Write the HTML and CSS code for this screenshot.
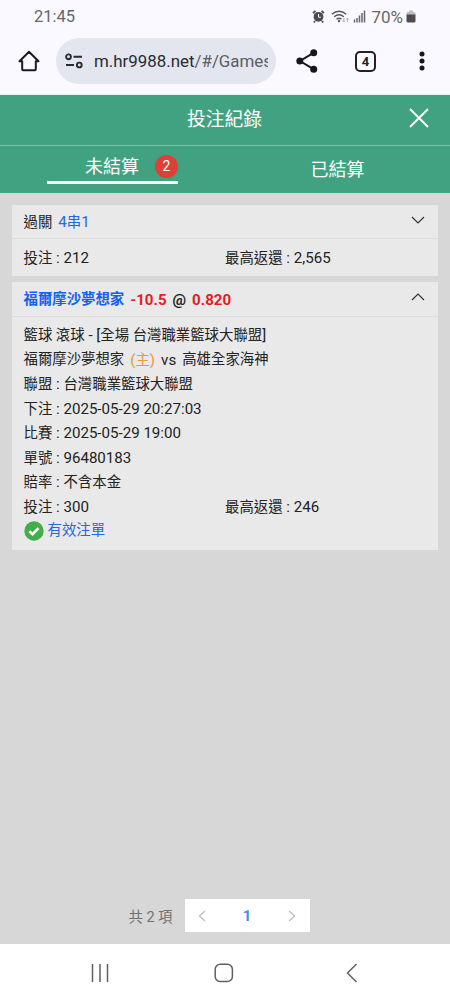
FILE: index.html
```html
<!DOCTYPE html>
<html lang="zh-Hant">
<head>
<meta charset="utf-8">
<title>投注紀錄</title>
<link rel="stylesheet" href="styles.css">
</head>
<body>
<div class="phone">
  <div class="status">
    <span class="time">21:45</span>
    <div class="status-right">
      <svg class="alarm" width="13" height="13" viewBox="0 0 12 13"><circle cx="6" cy="6.8" r="4.900" fill="#4b4b50"/><path d="M.5 3 3 .8M11.500 3 9 .8M2.500 11 1.300 12.500M9.500 11l1.200 1.500" stroke="#4b4b50" stroke-width="1.700"/><path d="M6 4v3.200h2.400" fill="none" stroke="#fff" stroke-width="1"/></svg>
      <svg class="wifi" width="19" height="14" viewBox="0 0 19 14"><g fill="none" stroke="#555559" stroke-width="1.400"><path d="M.8 4.300Q8 -2 15.200 4.300M3.200 6.800Q8 2.800 12.800 6.800M5.500 9.300Q8 7.300 10.500 9.300"/></g><circle cx="8" cy="11" r="1.200" fill="#555559"/><path d="M12.800 8v4m-1.300-1.500 1.300 1.500 1.300-1.500M16.500 12V8m-1.300 1.500L16.500 8l1.300 1.500" fill="none" stroke="#aaa" stroke-width=".9"/></svg>
      <svg class="signal" width="13" height="13" viewBox="0 0 13 13"><path d="M1.500 12.500V9.500M4 12.500V8M6.500 12.500V5.500M9 12.500V3M11.500 12.500V.5" stroke="#66666a" stroke-width="1.500"/></svg>
      <span class="percent">70%</span>
      <svg width="10" height="13" viewBox="0 0 10 13"><path d="M3 .5h4V2h1q1.500 0 1.500 1.500V5h-9V3.500Q.5 2 2 2h1z" fill="#bdbdc2"/><path d="M.5 4.500h9V11q0 1.500-1.500 1.500H2Q.5 12.500.5 11z" fill="#4c4c50"/></svg>
    </div>
  </div>
  <div class="browser">
    <svg class="home" width="22" height="22" viewBox="0 0 22 22"><path d="M1.500 11.200 11 1.800l9.500 9.400H17.800v8.100q0 1-1 1H5.200q-1 0-1-1v-8.100z" fill="none" stroke="#1c1b20" stroke-width="2" stroke-linejoin="round"/></svg>
    <div class="address">
      <svg width="18" height="16" viewBox="0 0 18 16"><g fill="none" stroke="#292a2e" stroke-width="1.900"><circle cx="3.500" cy="3.800" r="2.400"/><path d="M8.500 3.800h8.500M1 12h8"/><circle cx="14.300" cy="12" r="2.400"/></g></svg>
      <div class="url">m.hr9988.net<span>/#/Games</span></div>
    </div>
    <svg class="share" width="22" height="24" viewBox="0 0 22 24"><path d="M17.500 3.800 4 12l13.500 8.200" fill="none" stroke="#17171b" stroke-width="2"/><g fill="#17171b"><circle cx="17.700" cy="3.800" r="3.500"/><circle cx="3.800" cy="12" r="3.500"/><circle cx="17.700" cy="20.200" r="3.500"/></g></svg>
    <div class="tabs-count">4</div>
    <svg class="dots" width="6" height="20" viewBox="0 0 6 20"><g fill="#17171b"><circle cx="3" cy="2.900" r="2.500"/><circle cx="3" cy="10" r="2.500"/><circle cx="3" cy="17.100" r="2.500"/></g></svg>
  </div>

  <header class="title-bar">
    <h1>投注紀錄</h1>
    <svg class="close" width="20" height="20" viewBox="0 0 20 20"><path d="m1 1 18 18M19 1 1 19" stroke="#fff" stroke-width="1.900"/></svg>
  </header>
  <nav class="tabs">
    <div class="tab"><div class="tab-active">未結算<b class="badge">2</b></div></div>
    <div class="tab tab-idle">已結算</div>
  </nav>

  <main class="content">
    <section class="card">
      <div class="card-head">
        <div>過關<span class="blue gap-left"><i>4</i>串<i>1</i></span></div>
        <svg class="arrow" width="14" height="8" viewBox="0 0 14 8"><path d="m1 1 6 6 6-6" fill="none" stroke="#333" stroke-width="1.200"/></svg>
      </div>
      <div class="summary"><div>投注<i> : 212</i></div><div>最高返還<i> : 2,565</i></div></div>
    </section>
    <section class="card">
      <div class="card-head second">
        <div class="pick"><span class="blue">福爾摩沙夢想家</span><i class="red">-10.5</i><i>@</i><i class="red">0.820</i></div>
        <svg class="arrow" width="14" height="8" viewBox="0 0 14 8"><path d="m1 7 6-6 6 6" fill="none" stroke="#333" stroke-width="1.200"/></svg>
      </div>
      <div class="details">
        <div>籃球 滾球<i> - [</i>全場 台灣職業籃球大聯盟<i>]</i></div>
        <div class="match"><span>福爾摩沙夢想家</span><span class="orange"><i>(</i>主<i>)</i></span><i>vs</i><span>高雄全家海神</span></div>
        <div>聯盟<i> : </i>台灣職業籃球大聯盟</div>
        <div>下注<i> : 2025-05-29 20:27:03</i></div>
        <div>比賽<i> : 2025-05-29 19:00</i></div>
        <div>單號<i> : 96480183</i></div>
        <div>賠率<i> : </i>不含本金</div>
        <div class="split"><div>投注<i> : 300</i></div><div>最高返還<i> : 246</i></div></div>
        <div class="valid"><svg width="20" height="20" viewBox="0 0 20 20"><circle cx="10" cy="10" r="9.700" fill="#43ac4b"/><path d="m5.300 10.200 3.200 3 6-6" fill="none" stroke="#fff" stroke-width="2.600"/></svg><span class="blue">有效注單</span></div>
      </div>
    </section>
    <div class="pagination">
      <span class="total">共 2 項</span>
      <div class="pager">
        <svg width="8" height="12" viewBox="0 0 8 12"><path d="M7 1 1.500 6 7 11" fill="none" stroke="#bfc2c8" stroke-width="1.500"/></svg>
        <b>1</b>
        <svg width="8" height="12" viewBox="0 0 8 12"><path d="m1 1 5.500 5L1 11" fill="none" stroke="#bfc2c8" stroke-width="1.500"/></svg>
      </div>
    </div>
  </main>
  <footer class="system-nav">
    <svg width="18" height="20" viewBox="0 0 18 20"><path d="M1.500 1v18M9 1v18M16.500 1v18" stroke="#606060" stroke-width="1.500"/></svg>
    <svg width="20" height="20" viewBox="0 0 20 20"><rect x="1.200" y="1.200" width="17.200" height="17.200" rx="5" fill="none" stroke="#606060" stroke-width="1.500"/></svg>
    <svg width="12" height="20" viewBox="0 0 12 20"><path d="m10.500 1-9 9 9 9" fill="none" stroke="#606060" stroke-width="1.500"/></svg>
  </footer>
</div>
</body>
</html>
```

FILE: styles.css
```css
* { box-sizing: border-box; }
body { margin: 0; font-family: Roboto, "Noto Sans CJK TC", sans-serif; color: #222; }
svg { display: block; flex: none; }
i { font-style: normal; font-size: 15.1px; white-space: pre; }
.phone { width: 450px; height: 1000px; display: flex; flex-direction: column; overflow: hidden; background: #d7d7d7; }
.status { height: 34px; background: #faf9ff; display: flex; justify-content: space-between; padding: 0 34px 0 34px; align-items: center; color: #66666b; }
.time { font-size: 16.5px; line-height: 34px; }
.status-right { display: flex; align-items: center; height: 34px; padding-bottom: 1px; }
.alarm { margin-right: 6px; }
.wifi { margin-right: 3px; }
.signal { margin-right: 5px; }
.percent { font-size: 17px; margin-right: 3px; }
.browser { height: 61px; background: #faf9ff; border-bottom: 1px solid #e3f2f0; display: flex; align-items: center; padding: 0 25px 6px 18px; }
.home { margin-right: 16px; }
.address { width: 220px; height: 46px; border-radius: 23px; background: #e3e5ef; display: flex; align-items: center; padding: 0 8px 0 9px; gap: 11px; }
.url { flex: 1; overflow: hidden; white-space: nowrap; font-size: 16.9px; color: #2a2b30; }
.url span { color: #5c5d63; }
.share { margin-left: 20px; }
.tabs-count { width: 21px; height: 21px; border: 2px solid #222226; border-radius: 5px; margin-left: 37px; display: flex; align-items: center; justify-content: center; font-size: 13px; font-weight: 700; }
.dots { margin-left: auto; }
.title-bar { height: 51px; background: #41a281; border-bottom: 1px solid #7bbfa7; display: grid; grid-template-columns: 1fr auto 1fr; align-items: center; padding: 0 21px 0 20px; color: #fff; }
.title-bar h1 { grid-column: 2; margin: 0; font-size: 18.8px; font-weight: 400; line-height: 48px; padding-bottom: 1px; }
.close { justify-self: end; margin-bottom: 4px; }
.tabs { height: 47px; background: #41a281; display: grid; grid-template-columns: 1fr 1fr; color: #fff; font-size: 18px; }
.tab { display: flex; justify-content: center; }
.tab-active { width: 131px; height: 38px; border-bottom: 3px solid #fff; display: flex; align-items: center; padding: 5px 0 0 38px; gap: 16px; line-height: 35px; }
.badge { width: 23px; height: 23px; border-radius: 50%; background: #dc4037; font-size: 14px; line-height: 23px; text-align: center; font-weight: 400; flex: none; }
.tab-idle { line-height: 47px; }
.content { flex: 1; padding: 12px; display: flex; flex-direction: column; gap: 6px; font-size: 14.4px; }
.card { background: #e9e9e9; }
.card-head { height: 34px; border-bottom: 1px solid #dadcdf; display: flex; align-items: center; justify-content: space-between; padding: 0 13px 0 11.5px; }
.card-head > div { line-height: 34px; padding-top: 1px; }
.arrow { margin-bottom: 4px; }
.blue { color: #2268df; }
.pick .blue { color: #155ff0; }
.red { color: #e61c26; }
.orange { color: #ed982f; }
.gap-left { margin-left: 6px; }
.summary, .split { display: grid; grid-template-columns: 201.5px 1fr; }
.summary { height: 37px; padding: 0 12px 0 11.5px; line-height: 38px; }
.second { height: 35px; }
.pick { display: flex; gap: 6px; font-weight: 700; }
.pick i { font-size: 15.1px; }
.details { padding: 6px 12px 6px 11.5px; height: 233px; line-height: 24.5px; }
.details > div { height: 24.5px; }
.match { display: flex; gap: 6px; }
.valid { display: flex; align-items: center; gap: 4px; }
.pagination { margin-top: auto; display: flex; justify-content: center; align-items: center; height: 33px; gap: 12px; padding-right: 12px; font-size: 14.4px; color: #707070; }
.pager { width: 125px; height: 33px; background: #fff; display: flex; align-items: center; justify-content: space-between; padding: 0 13px; }
.pager b { color: #3d91e6; font-size: 15px; }
.system-nav { height: 56px; background: #fff; display: grid; grid-template-columns: 1fr 20px 1fr; align-items: center; justify-items: start; padding: 2px 92px 0 90.5px; }
.system-nav svg:last-child { justify-self: end; }
```
